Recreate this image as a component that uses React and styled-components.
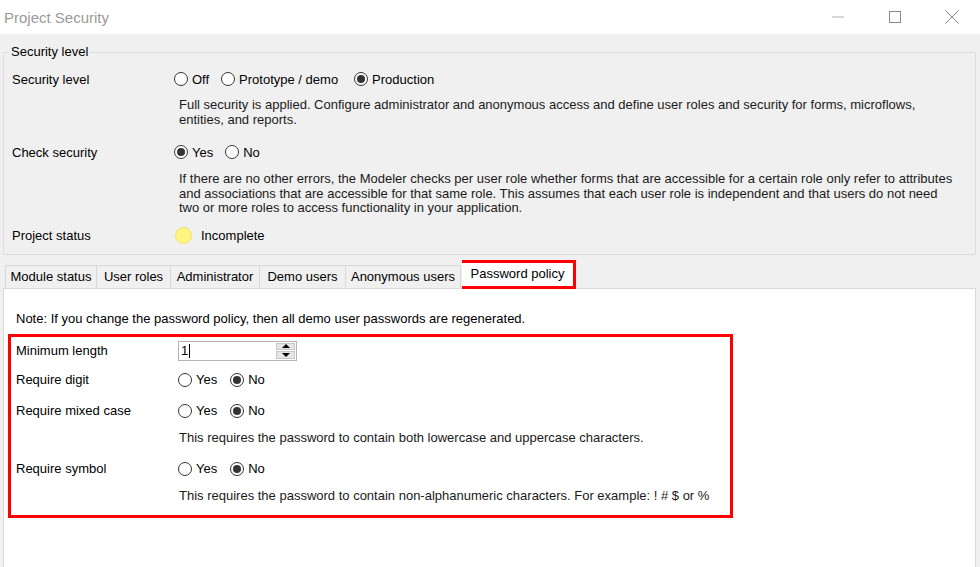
import React from 'react'
import styled, { createGlobalStyle } from 'styled-components'

const GlobalStyle = createGlobalStyle`
    html, body {
        margin: 0;
        padding: 0;
        background: #f0f0f0;
    }
    body {
        font-family: "Liberation Sans", Arial, sans-serif;
        font-size: 13px;
        color: #000;
    }
`

const Window = styled.div`
    width: 980px;
    height: 567px;
    overflow: hidden;
    display: flex;
    flex-direction: column;
    background: #f0f0f0;
`

const TitleBar = styled.div`
    height: 34px;
    flex: none;
    background: #fff;
    display: flex;
    align-items: center;
    justify-content: space-between;
    padding-left: 4px;
`

const Title = styled.div`
    font-size: 15px;
    color: #9a9a9a;
`

const Controls = styled.div`
    display: flex;
    align-items: center;
    height: 100%;
`

const ControlButton = styled.div`
    width: 57px;
    height: 100%;
    display: flex;
    align-items: center;
    justify-content: center;
`

const Body = styled.div`
    flex: 1;
    display: flex;
    flex-direction: column;
    padding: 0 4px 0 3px;
    min-height: 0;
`

const GroupBox = styled.fieldset`
    margin: 11px 0 0 0;
    padding: 10px 8px 8px 8px;
    border: 1px solid #dcdcdc;
    border-radius: 2px;
    display: flex;
    flex-direction: column;
`

const Legend = styled.legend`
    padding: 0 2px;
    margin-left: -3px;
    line-height: 14px;
`

const Row = styled.div`
    display: grid;
    grid-template-columns: 162px 1fr;
    align-items: center;
    height: 20px;
    margin-top: ${p => p.$top || 0}px;
`

const Label = styled.div`
    white-space: nowrap;
`

const Options = styled.div`
    display: flex;
    align-items: center;
`

const RadioItem = styled.label`
    display: flex;
    align-items: center;
    margin-right: ${p => p.$gap || 12}px;
    white-space: nowrap;
`

const Circle = styled.span`
    box-sizing: border-box;
    width: 14px;
    height: 14px;
    border-radius: 50%;
    border: 1px solid #333;
    background: #fff;
    margin-right: 4px;
    display: flex;
    align-items: center;
    justify-content: center;
    &::after {
        content: '';
        width: 8px;
        height: 8px;
        border-radius: 50%;
        background: #333;
        display: ${p => (p.$checked ? 'block' : 'none')};
    }
`

const Hint = styled.div`
    margin-top: ${p => p.$top || 0}px;
    padding-left: ${p => p.$indent || 167}px;
    line-height: ${p => p.$lh || 15}px;
    color: #1a1a1a;
    white-space: nowrap;
`

const StatusDot = styled.span`
    box-sizing: border-box;
    width: 17px;
    height: 17px;
    border-radius: 50%;
    background: #fff57f;
    border: 1px solid #f1e46a;
    margin: 0 9px 0 1px;
`

const TabStrip = styled.div`
    display: flex;
    align-items: flex-end;
    margin: 7px 0 0 2px;
    height: 26px;
    position: relative;
    z-index: 1;
`

const Tab = styled.div`
    box-sizing: border-box;
    width: ${p => p.$width}px;
    height: 23px;
    display: flex;
    align-items: center;
    justify-content: center;
    white-space: nowrap;
    background: #f0f0f0;
    border: 1px solid #d9d9d9;
    border-bottom: none;
    & + & {
        border-left: none;
    }
    ${p => p.$active && `
        height: 29px;
        background: #fff;
        border: 3px solid #ff0000;
        padding-bottom: 2px;
        margin: -3px 0 -1px 1px;
    `}
`

const Panel = styled.div`
    flex: 1;
    background: #fff;
    border: 1px solid #d9d9d9;
    border-bottom: none;
    padding: 23px 0 0 4px;
`

const Note = styled.div`
    padding-left: 8px;
    line-height: 14px;
`

const Highlight = styled.div`
    width: 725px;
    box-sizing: border-box;
    margin-top: 8px;
    border: 3px solid #ff0000;
    padding: 4px 0 12px 5px;
    display: flex;
    flex-direction: column;
`

const Spinner = styled.div`
    box-sizing: border-box;
    width: 119px;
    height: 20px;
    border: 1px solid #b4b4b4;
    background: #fff;
    display: flex;
`

const SpinValue = styled.div`
    flex: 1;
    display: flex;
    align-items: center;
    padding-left: 2px;
    &::after {
        content: '';
        width: 1px;
        height: 14px;
        background: #000;
        margin-left: 1px;
    }
`

const SpinButtons = styled.div`
    width: 19px;
    display: flex;
    flex-direction: column;
    padding: 1px 1px 1px 0;
    gap: 1px;
`

const SpinButton = styled.div`
    flex: 1;
    background: #e6e6e6;
    border: 1px solid #c8c8c8;
    display: flex;
    align-items: center;
    justify-content: center;
    &::after {
        content: '';
        border-left: 4px solid transparent;
        border-right: 4px solid transparent;
        ${p => (p.$down ? 'border-top: 4px solid #000;' : 'border-bottom: 4px solid #000;')}
    }
`

const Radio = ({ checked, children, gap }) => (
    <RadioItem $gap={gap}>
        <Circle $checked={checked} />
        {children}
    </RadioItem>
)

const YesNo = ({ yes }) => (
    <Options>
        <Radio checked={yes} gap={13}>Yes</Radio>
        <Radio checked={!yes}>No</Radio>
    </Options>
)

const tabs = [
    { name: 'Module status', width: 92 },
    { name: 'User roles', width: 74 },
    { name: 'Administrator', width: 89 },
    { name: 'Demo users', width: 86 },
    { name: 'Anonymous users', width: 115 },
    { name: 'Password policy', width: 114, active: true },
]

export default function App() {
    return (
        <Window>
            <GlobalStyle />
            <TitleBar>
                <Title>Project Security</Title>
                <Controls>
                    <ControlButton>
                        <svg width="12" height="2" viewBox="0 0 12 2"><line x1="0" y1="1" x2="12" y2="1" stroke="#b0b0b0" strokeWidth="1" /></svg>
                    </ControlButton>
                    <ControlButton>
                        <svg width="12" height="12" viewBox="0 0 12 12"><rect x="0.5" y="0.5" width="11" height="11" fill="none" stroke="#8a8a8a" strokeWidth="1" /></svg>
                    </ControlButton>
                    <ControlButton>
                        <svg width="14" height="14" viewBox="0 0 14 14"><path d="M0.5 0.5 L13.5 13.5 M13.5 0.5 L0.5 13.5" stroke="#8a8a8a" strokeWidth="1" /></svg>
                    </ControlButton>
                </Controls>
            </TitleBar>
            <Body>
                <GroupBox>
                    <Legend>Security level</Legend>
                    <Row>
                        <Label>Security level</Label>
                        <Options>
                            <Radio>Off</Radio>
                            <Radio gap={16}>Prototype / demo</Radio>
                            <Radio checked>Production</Radio>
                        </Options>
                    </Row>
                    <Hint $top={8}>
                        Full security is applied. Configure administrator and anonymous access and define user roles and security for forms, microflows,<br />
                        entities, and reports.
                    </Hint>
                    <Row $top={15}>
                        <Label>Check security</Label>
                        <Options>
                            <Radio checked>Yes</Radio>
                            <Radio>No</Radio>
                        </Options>
                    </Row>
                    <Hint $top={10} $lh={14.5}>
                        If there are no other errors, the Modeler checks per user role whether forms that are accessible for a certain role only refer to attributes<br />
                        and associations that are accessible for that same role. This assumes that each user role is independent and that users do not need<br />
                        two or more roles to access functionality in your application.
                    </Hint>
                    <Row $top={10}>
                        <Label>Project status</Label>
                        <Options>
                            <StatusDot />
                            Incomplete
                        </Options>
                    </Row>
                </GroupBox>
                <TabStrip>
                    {tabs.map(t => (
                        <Tab key={t.name} $width={t.width} $active={t.active}>{t.name}</Tab>
                    ))}
                </TabStrip>
                <Panel>
                    <Note>Note: If you change the password policy, then all demo user passwords are regenerated.</Note>
                    <Highlight>
                        <Row>
                            <Label>Minimum length</Label>
                            <Spinner>
                                <SpinValue>1</SpinValue>
                                <SpinButtons>
                                    <SpinButton />
                                    <SpinButton $down />
                                </SpinButtons>
                            </Spinner>
                        </Row>
                        <Row $top={9}>
                            <Label>Require digit</Label>
                            <YesNo />
                        </Row>
                        <Row $top={11}>
                            <Label>Require mixed case</Label>
                            <YesNo />
                        </Row>
                        <Hint $top={10} $lh={14} $indent={163}>
                            This requires the password to contain both lowercase and uppercase characters.
                        </Hint>
                        <Row $top={14}>
                            <Label>Require symbol</Label>
                            <YesNo />
                        </Row>
                        <Hint $top={10} $lh={14} $indent={163}>
                            This requires the password to contain non-alphanumeric characters. For example: ! # $ or %
                        </Hint>
                    </Highlight>
                </Panel>
            </Body>
        </Window>
    )
}
